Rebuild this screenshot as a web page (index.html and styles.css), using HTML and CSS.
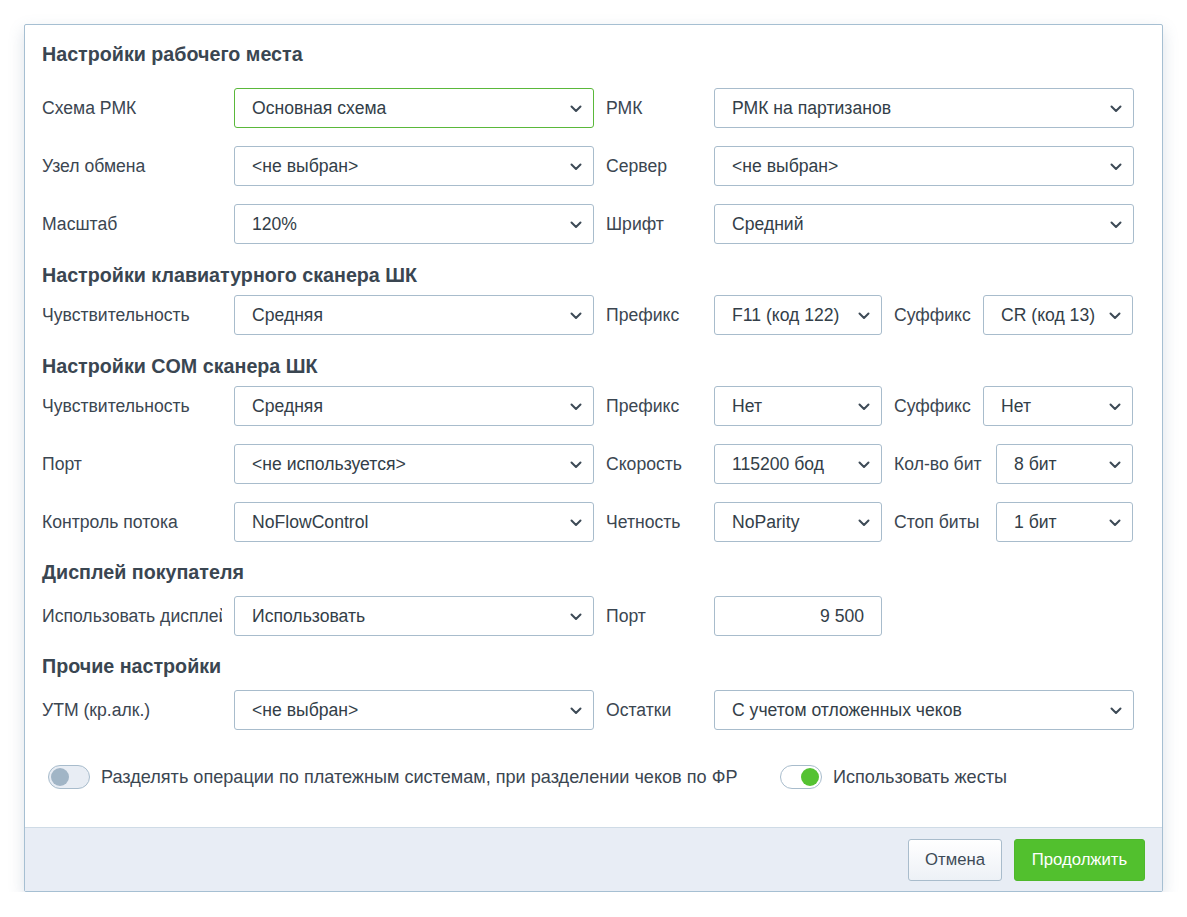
FILE: index.html
```html
<!DOCTYPE html>
<html lang="ru">
<head>
<meta charset="utf-8">
<title>Настройки рабочего места</title>
<link rel="stylesheet" href="styles.css">
</head>
<body>
<svg width="0" height="0" class="defs">
  <defs>
    <symbol id="chev" viewBox="0 0 12 8">
      <path d="M1.5 1.5 L6 6 L10.5 1.5" fill="none" stroke="#3d4a56" stroke-width="2" stroke-linecap="round" stroke-linejoin="round"/>
    </symbol>
  </defs>
</svg>
<div class="dialog">
  <div class="content">
    <h2 class="heading first">Настройки рабочего места</h2>

    <div class="row">
      <div class="label">Схема РМК</div>
      <div class="select w360 active"><span>Основная схема</span><svg class="chev"><use href="#chev"/></svg></div>
      <div class="label2">РМК</div>
      <div class="select w420"><span>РМК на партизанов</span><svg class="chev"><use href="#chev"/></svg></div>
    </div>
    <div class="row">
      <div class="label">Узел обмена</div>
      <div class="select w360"><span>&lt;не выбран&gt;</span><svg class="chev"><use href="#chev"/></svg></div>
      <div class="label2">Сервер</div>
      <div class="select w420"><span>&lt;не выбран&gt;</span><svg class="chev"><use href="#chev"/></svg></div>
    </div>
    <div class="row">
      <div class="label">Масштаб</div>
      <div class="select w360"><span>120%</span><svg class="chev"><use href="#chev"/></svg></div>
      <div class="label2">Шрифт</div>
      <div class="select w420"><span>Средний</span><svg class="chev"><use href="#chev"/></svg></div>
    </div>

    <h2 class="heading">Настройки клавиатурного сканера ШК</h2>
    <div class="row">
      <div class="label">Чувствительность</div>
      <div class="select w360"><span>Средняя</span><svg class="chev"><use href="#chev"/></svg></div>
      <div class="label2">Префикс</div>
      <div class="select w168"><span>F11 (код 122)</span><svg class="chev"><use href="#chev"/></svg></div>
      <div class="label3 l89">Суффикс</div>
      <div class="select w150"><span>CR (код 13)</span><svg class="chev"><use href="#chev"/></svg></div>
    </div>

    <h2 class="heading">Настройки COM сканера ШК</h2>
    <div class="row">
      <div class="label">Чувствительность</div>
      <div class="select w360"><span>Средняя</span><svg class="chev"><use href="#chev"/></svg></div>
      <div class="label2">Префикс</div>
      <div class="select w168"><span>Нет</span><svg class="chev"><use href="#chev"/></svg></div>
      <div class="label3 l89">Суффикс</div>
      <div class="select w150"><span>Нет</span><svg class="chev"><use href="#chev"/></svg></div>
    </div>
    <div class="row">
      <div class="label">Порт</div>
      <div class="select w360"><span>&lt;не используется&gt;</span><svg class="chev"><use href="#chev"/></svg></div>
      <div class="label2">Скорость</div>
      <div class="select w168"><span>115200 бод</span><svg class="chev"><use href="#chev"/></svg></div>
      <div class="label3 l102">Кол-во бит</div>
      <div class="select w137"><span>8 бит</span><svg class="chev"><use href="#chev"/></svg></div>
    </div>
    <div class="row">
      <div class="label">Контроль потока</div>
      <div class="select w360"><span>NoFlowControl</span><svg class="chev"><use href="#chev"/></svg></div>
      <div class="label2">Четность</div>
      <div class="select w168"><span>NoParity</span><svg class="chev"><use href="#chev"/></svg></div>
      <div class="label3 l102">Стоп биты</div>
      <div class="select w137"><span>1 бит</span><svg class="chev"><use href="#chev"/></svg></div>
    </div>

    <h2 class="heading late">Дисплей покупателя</h2>
    <div class="row">
      <div class="label">Использовать дисплей</div>
      <div class="select w360"><span>Использовать</span><svg class="chev"><use href="#chev"/></svg></div>
      <div class="label2">Порт</div>
      <div class="input w168">9 500</div>
    </div>

    <h2 class="heading late">Прочие настройки</h2>
    <div class="row">
      <div class="label">УТМ (кр.алк.)</div>
      <div class="select w360"><span>&lt;не выбран&gt;</span><svg class="chev"><use href="#chev"/></svg></div>
      <div class="label2">Остатки</div>
      <div class="select w420"><span>С учетом отложенных чеков</span><svg class="chev"><use href="#chev"/></svg></div>
    </div>

    <div class="toggles">
      <div class="toggle-item wide">
        <span class="toggle"><span class="knob"></span></span>
        <span class="toggle-label">Разделять операции по платежным системам, при разделении чеков по ФР</span>
      </div>
      <div class="toggle-item">
        <span class="toggle on"><span class="knob"></span></span>
        <span class="toggle-label">Использовать жесты</span>
      </div>
    </div>
  </div>
  <div class="footer">
    <button class="btn cancel">Отмена</button>
    <button class="btn primary">Продолжить</button>
  </div>
</div>
</body>
</html>
```

FILE: styles.css
```css
html, body {
  margin: 0;
  padding: 0;
  background: #ffffff;
}
body {
  font-family: "Liberation Sans", Arial, sans-serif;
  font-size: 17.6px;
  color: #3b4651;
  padding: 24px 0 0 24px;
}
.defs {
  position: absolute;
  width: 0;
  height: 0;
}
.dialog {
  width: 1137px;
  border: 1px solid #a6bfd2;
  border-radius: 2px;
  background: #ffffff;
  box-shadow: 0 6px 16px rgba(90, 120, 150, 0.22);
}
.content {
  padding: 17px 28px 38px 17px;
}
.heading {
  margin: 19px 0 8px;
  height: 24px;
  line-height: 24px;
  font-size: 19.7px;
  font-weight: bold;
  color: #3a4651;
}
.heading.first {
  margin-top: 0;
  margin-bottom: 22px;
}
.heading.late {
  margin-top: 18px;
  margin-bottom: 12px;
}
.row {
  display: flex;
  align-items: center;
  height: 40px;
}
.row + .row {
  margin-top: 18px;
}
.label {
  width: 180px;
  margin-right: 12px;
  white-space: nowrap;
  overflow: hidden;
}
.label2 {
  width: 120px;
  padding-left: 12px;
  box-sizing: border-box;
  white-space: nowrap;
}
.label3 {
  padding-left: 12px;
  box-sizing: border-box;
  white-space: nowrap;
}
.l89 { width: 101px; }
.l102 { width: 114px; }
.select, .input {
  box-sizing: border-box;
  height: 40px;
  border: 1px solid #a8bccc;
  border-radius: 3px;
  background: #ffffff;
  display: flex;
  align-items: center;
  color: #333e48;
  white-space: nowrap;
  padding-top: 1px;
}
.select {
  padding-left: 17px;
  padding-right: 11px;
  justify-content: space-between;
}
.select.active {
  border-color: #5ab83a;
}
.input {
  justify-content: flex-end;
  padding-right: 17px;
}
.chev {
  width: 12px;
  height: 8px;
  flex: none;
}
.w360 { width: 360px; }
.w420 { width: 420px; }
.w168 { width: 168px; }
.w150 { width: 150px; }
.w137 { width: 137px; }
.toggles {
  display: flex;
  align-items: center;
  margin-top: 35px;
  padding-left: 6px;
  height: 24px;
}
.toggle-item {
  display: flex;
  align-items: center;
}
.toggle-item.wide {
  width: 732px;
}
.toggle {
  box-sizing: border-box;
  width: 42px;
  height: 24px;
  border: 1px solid #a8bccc;
  border-radius: 12px;
  background: #e8edf4;
  display: flex;
  align-items: center;
  padding: 0 2px;
  margin-right: 11px;
}
.knob {
  width: 18px;
  height: 18px;
  border-radius: 50%;
  background: #a1b5c6;
}
.toggle.on {
  background: #ffffff;
  justify-content: flex-end;
}
.toggle.on .knob {
  background: #55c232;
}
.toggle-label {
  white-space: nowrap;
  color: #3b4651;
  font-size: 18.1px;
}
.footer {
  height: 63px;
  border-top: 1px solid #cfdbe6;
  background: #e8edf5;
  display: flex;
  justify-content: flex-end;
  align-items: center;
  gap: 12px;
  padding-right: 17px;
}
.btn {
  height: 42px;
  border-radius: 3px;
  font-family: "Liberation Sans", Arial, sans-serif;
  font-size: 16.7px;
  cursor: pointer;
}
.cancel {
  width: 94px;
  border: 1px solid #a9bccc;
  background: linear-gradient(#ffffff, #edf1f6);
  color: #3d4a56;
}
.primary {
  width: 131px;
  border: 1px solid #4fb82c;
  background: #52c02e;
  color: #ffffff;
}
```
